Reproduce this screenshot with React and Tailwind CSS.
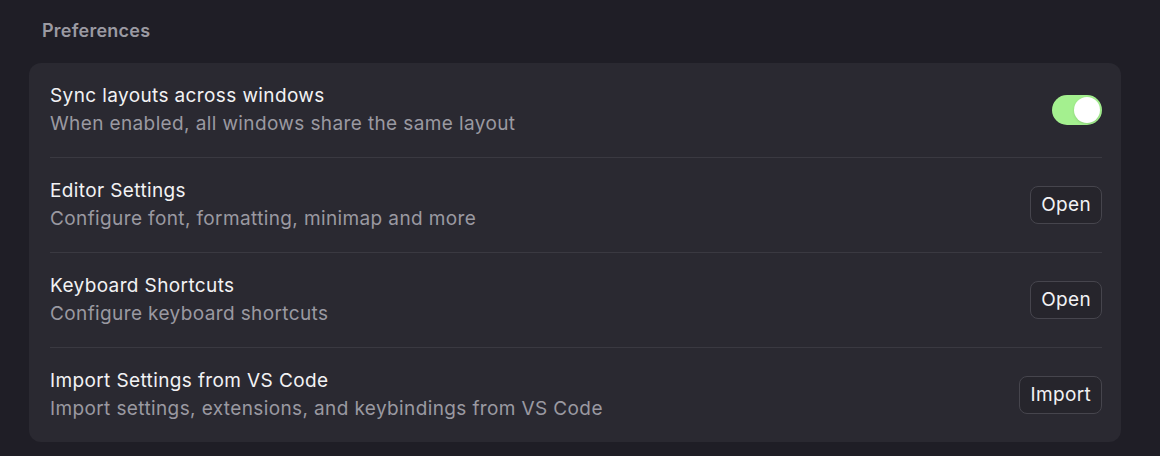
import { useState } from "react";

const rows = [
  {
    title: "Editor Settings",
    desc: "Configure font, formatting, minimap and more",
    action: "Open",
  },
  {
    title: "Keyboard Shortcuts",
    desc: "Configure keyboard shortcuts",
    action: "Open",
  },
  {
    title: "Import Settings from VS Code",
    desc: "Import settings, extensions, and keybindings from VS Code",
    action: "Import",
  },
];

function Toggle({ on, onChange }) {
  return (
    <button
      onClick={() => onChange(!on)}
      className={`relative w-[50px] h-[30px] rounded-full transition-colors ${
        on ? "bg-[#a4f08f]" : "bg-[#46454d]"
      }`}
    >
      <span
        className={`absolute top-[2px] w-[26px] h-[26px] rounded-full bg-white shadow transition-all ${
          on ? "left-[22px]" : "left-[2px]"
        }`}
      />
    </button>
  );
}

function Row({ title, desc, children, last }) {
  return (
    <div
      className={`ml-[21px] mr-[19px] flex items-center justify-between ${
        last ? "h-[94px]" : "h-[95px] border-b border-[#3a3941]"
      }`}
    >
      <div className="tracking-[0.38px]">
        <p className="text-[19px] leading-7 text-[#f2f2f4]">{title}</p>
        <p className="text-[19px] leading-7 text-[#9a99a1]">{desc}</p>
      </div>
      {children}
    </div>
  );
}

export default function App() {
  const [sync, setSync] = useState(true);

  return (
    <div
      className="w-[1160px] h-[456px] bg-[#1f1e26] pl-[29px] pr-[39px] pt-[19px]"
      style={{ fontFamily: "Inter, 'Noto Sans', sans-serif" }}
    >
      {/* Section heading */}
      <h2 className="ml-[13px] text-[18px] leading-6 font-semibold tracking-[0.25px] text-[#9b9aa2]">
        Preferences
      </h2>

      <div className="mt-[20px] bg-[#2a2931] rounded-xl">
        <Row
          title="Sync layouts across windows"
          desc="When enabled, all windows share the same layout"
        >
          <Toggle on={sync} onChange={setSync} />
        </Row>
        {rows.map((r, i) => (
          <Row
            key={r.title}
            title={r.title}
            desc={r.desc}
            last={i === rows.length - 1}
          >
            <button className="h-[38px] px-[10px] rounded-lg border border-[#46454d] bg-[#26252c] text-[19px] tracking-[0.35px] text-[#f2f2f4] hover:bg-[#302f37]">
              {r.action}
            </button>
          </Row>
        ))}
      </div>
    </div>
  );
}
